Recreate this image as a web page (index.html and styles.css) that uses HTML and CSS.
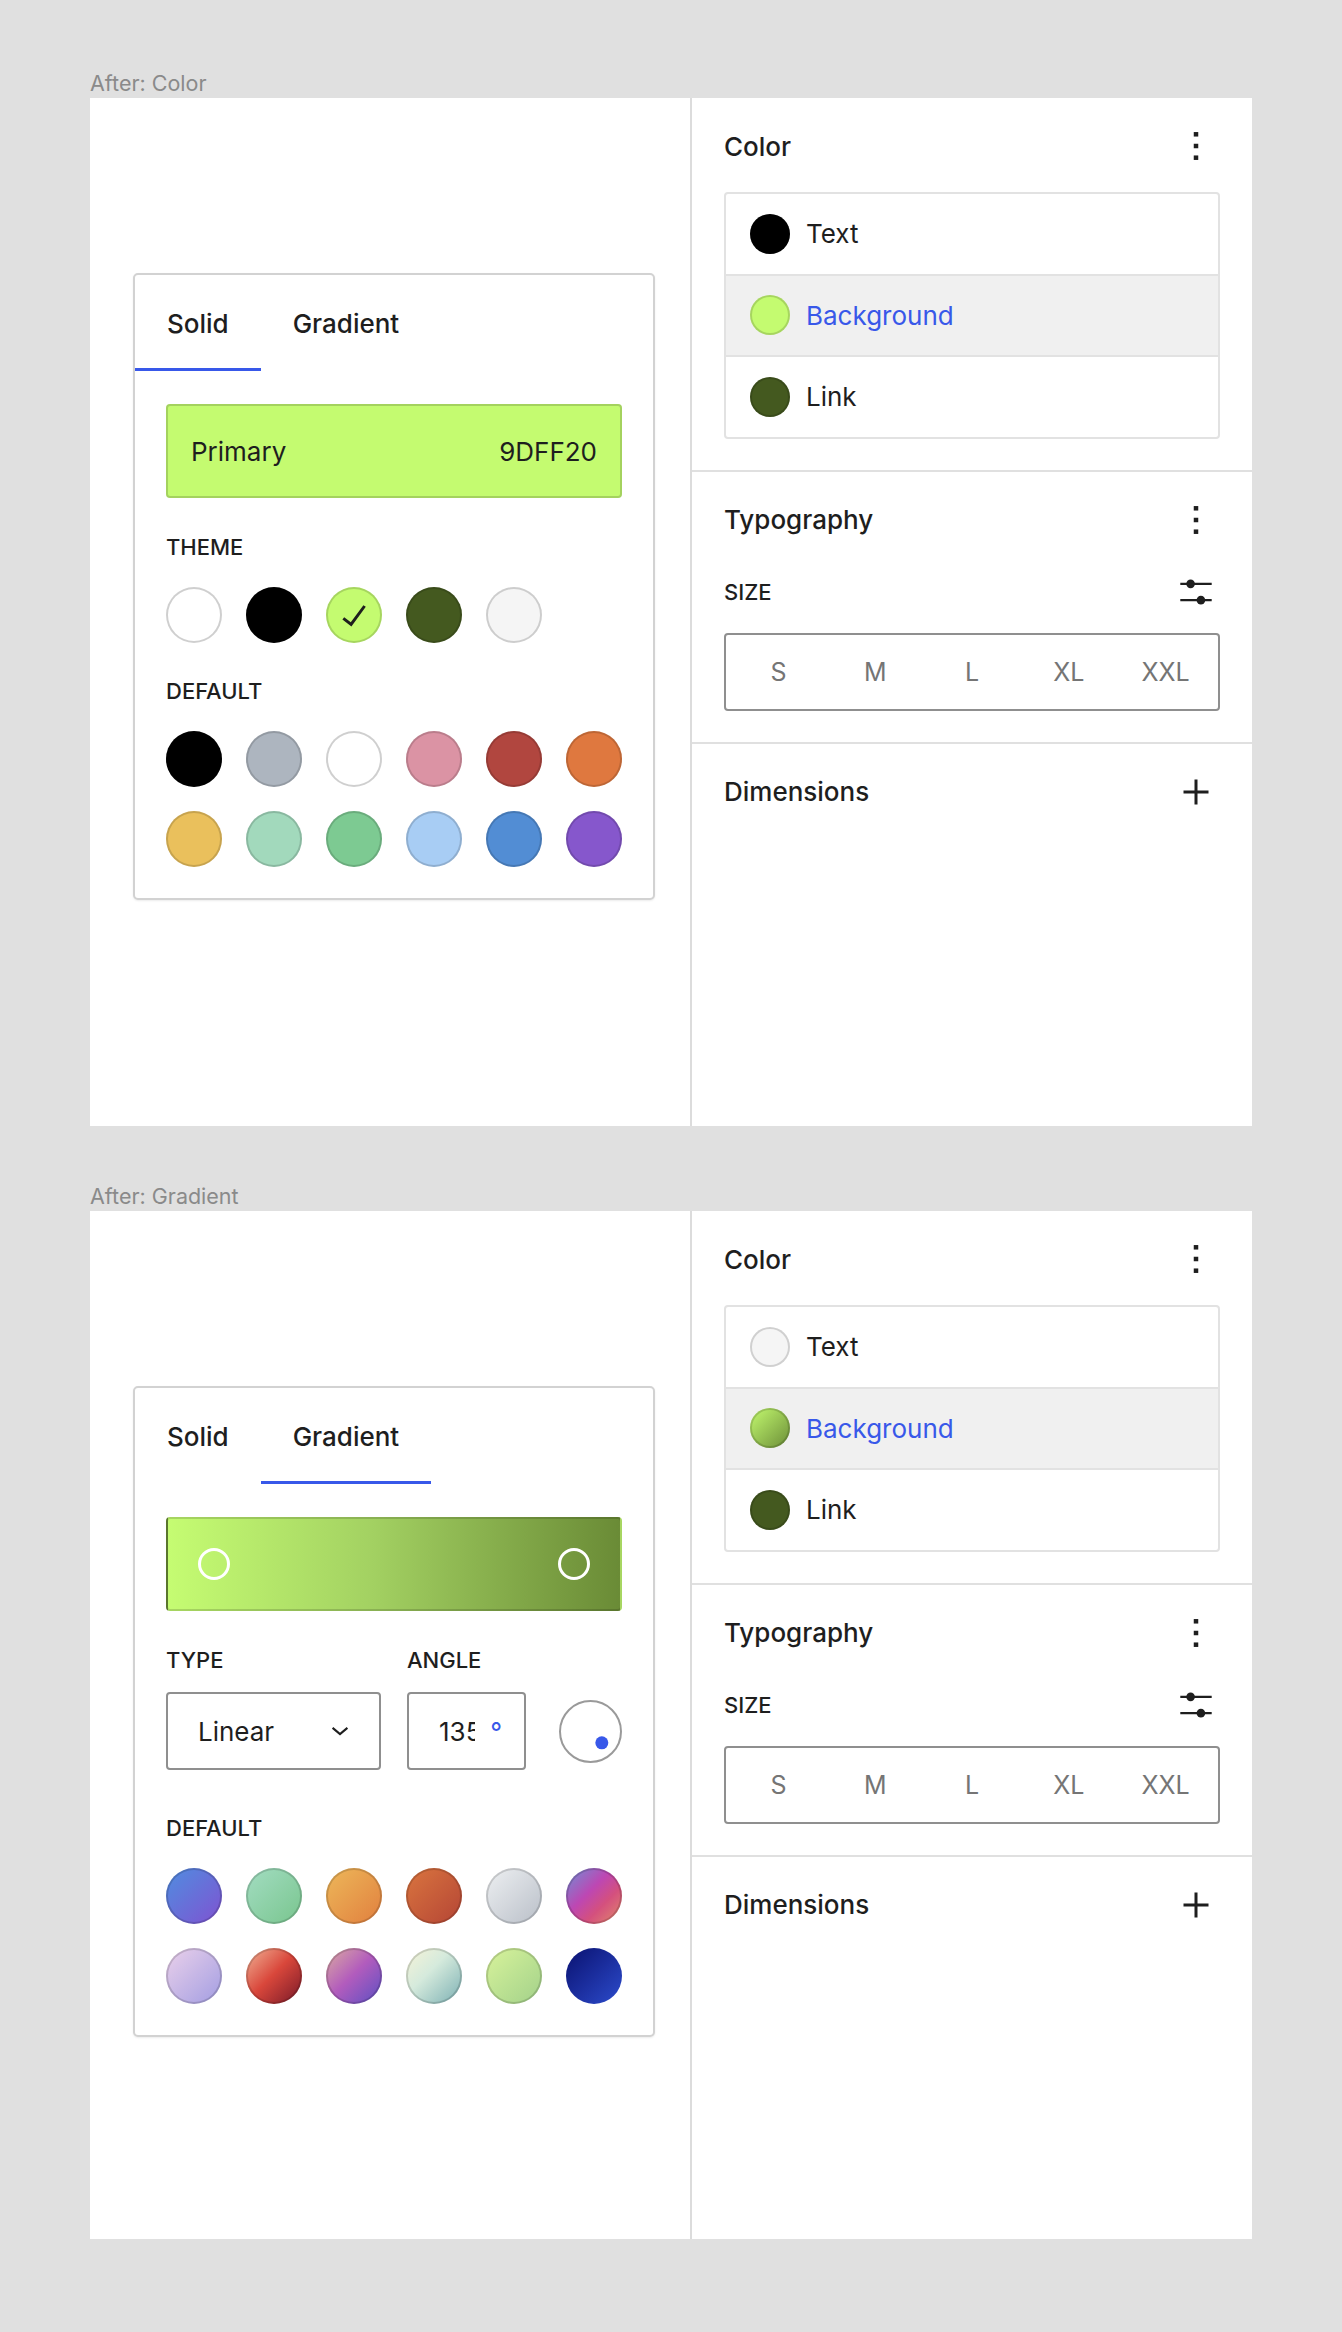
FILE: index.html
```html
<!DOCTYPE html>
<html lang="en">
<head>
<meta charset="utf-8">
<title>Color picker</title>
<link rel="stylesheet" href="styles.css">
</head>
<body>
<div class="page">

  <section class="group">
    <div class="group-label">After: Color</div>
    <div class="frame">
      <div class="canvas">
        <div class="picker">
          <div class="tabs">
            <div class="tab is-active">Solid</div>
            <div class="tab">Gradient</div>
          </div>
          <div class="picker-body">
            <div class="current">
              <span>Primary</span>
              <span>9DFF20</span>
            </div>
            <div class="label label-first">THEME</div>
            <div class="swatches">
              <span class="sw c-white"></span>
              <span class="sw c-black"></span>
              <span class="sw c-lime">
                <svg class="check" viewBox="0 0 24 24" width="48" height="48"><path d="M16.7 7.1l-6.3 8.5-3.3-2.5-.9 1.2 4.5 3.4L17.9 7.9z" fill="#1e1e1e"/></svg>
              </span>
              <span class="sw c-forest"></span>
              <span class="sw c-snow"></span>
            </div>
            <div class="label">DEFAULT</div>
            <div class="swatches">
              <span class="sw c-black"></span>
              <span class="sw c-gray"></span>
              <span class="sw c-white"></span>
              <span class="sw c-pink"></span>
              <span class="sw c-red"></span>
              <span class="sw c-orange"></span>
              <span class="sw c-yellow"></span>
              <span class="sw c-mint"></span>
              <span class="sw c-green"></span>
              <span class="sw c-sky"></span>
              <span class="sw c-blue"></span>
              <span class="sw c-purple"></span>
            </div>
          </div>
        </div>
      </div>
      <aside class="sidebar">
        <div class="panel">
          <div class="panel-head">
            <h2 class="panel-title">Color</h2>
            <svg class="icon" viewBox="0 0 48 48" width="48" height="48"><rect x="21.75" y="10.05" width="4.5" height="4.5" fill="#1e1e1e"/><rect x="21.75" y="21.75" width="4.5" height="4.5" fill="#1e1e1e"/><rect x="21.75" y="33.45" width="4.5" height="4.5" fill="#1e1e1e"/></svg>
          </div>
          <div class="colorlist">
            <div class="colorrow"><span class="ind c-black"></span><span>Text</span></div>
            <div class="colorrow is-selected"><span class="ind c-lime"></span><span>Background</span></div>
            <div class="colorrow"><span class="ind c-forest"></span><span>Link</span></div>
          </div>
        </div>
        <div class="panel">
          <div class="panel-head">
            <h2 class="panel-title">Typography</h2>
            <svg class="icon" viewBox="0 0 48 48" width="48" height="48"><rect x="21.75" y="10.05" width="4.5" height="4.5" fill="#1e1e1e"/><rect x="21.75" y="21.75" width="4.5" height="4.5" fill="#1e1e1e"/><rect x="21.75" y="33.45" width="4.5" height="4.5" fill="#1e1e1e"/></svg>
          </div>
          <div class="size-head">
            <span class="label-inline">SIZE</span>
            <svg class="icon" viewBox="0 0 48 48" width="48" height="48"><path d="M8.3 15.85H39.7M8.3 32.15H39.7" stroke="#1e1e1e" stroke-width="2.4" fill="none"/><circle cx="18.6" cy="15.85" r="4.3" fill="#1e1e1e"/><circle cx="28.9" cy="32.15" r="4.3" fill="#1e1e1e"/></svg>
          </div>
          <div class="segmented">
            <span>S</span><span>M</span><span>L</span><span>XL</span><span>XXL</span>
          </div>
        </div>
        <div class="panel">
          <div class="panel-head">
            <h2 class="panel-title">Dimensions</h2>
            <svg class="icon" viewBox="0 0 48 48" width="48" height="48"><path d="M24 11.5V36.5M11.5 24H36.5" stroke="#1e1e1e" stroke-width="3" fill="none"/></svg>
          </div>
        </div>
      </aside>
    </div>
  </section>

  <section class="group">
    <div class="group-label">After: Gradient</div>
    <div class="frame">
      <div class="canvas">
        <div class="picker">
          <div class="tabs">
            <div class="tab">Solid</div>
            <div class="tab is-active">Gradient</div>
          </div>
          <div class="picker-body">
            <div class="gradient-bar">
              <span class="stop"></span>
              <span class="stop"></span>
            </div>
            <div class="grad-controls">
              <span class="label-inline">TYPE</span>
              <span class="label-inline">ANGLE</span>
              <span></span>
              <div class="select">
                <span>Linear</span>
                <svg viewBox="0 0 24 24" width="24" height="24"><path d="M4.6 8.9L12 15.1 19.4 8.9" stroke="#1e1e1e" stroke-width="2.1" fill="none"/></svg>
              </div>
              <div class="angle">
                <span class="angle-value">135</span>
                <span class="angle-unit">°</span>
              </div>
              <div class="dial"><div class="dial-arm"><span class="dial-dot"></span></div></div>
            </div>
            <div class="label label-grad">DEFAULT</div>
            <div class="swatches">
              <span class="sw g1"></span>
              <span class="sw g2"></span>
              <span class="sw g3"></span>
              <span class="sw g4"></span>
              <span class="sw g5"></span>
              <span class="sw g6"></span>
              <span class="sw g7"></span>
              <span class="sw g8"></span>
              <span class="sw g9"></span>
              <span class="sw g10"></span>
              <span class="sw g11"></span>
              <span class="sw g12"></span>
            </div>
          </div>
        </div>
      </div>
      <aside class="sidebar">
        <div class="panel">
          <div class="panel-head">
            <h2 class="panel-title">Color</h2>
            <svg class="icon" viewBox="0 0 48 48" width="48" height="48"><rect x="21.75" y="10.05" width="4.5" height="4.5" fill="#1e1e1e"/><rect x="21.75" y="21.75" width="4.5" height="4.5" fill="#1e1e1e"/><rect x="21.75" y="33.45" width="4.5" height="4.5" fill="#1e1e1e"/></svg>
          </div>
          <div class="colorlist">
            <div class="colorrow"><span class="ind c-snow"></span><span>Text</span></div>
            <div class="colorrow is-selected"><span class="ind c-limegrad"></span><span>Background</span></div>
            <div class="colorrow"><span class="ind c-forest"></span><span>Link</span></div>
          </div>
        </div>
        <div class="panel">
          <div class="panel-head">
            <h2 class="panel-title">Typography</h2>
            <svg class="icon" viewBox="0 0 48 48" width="48" height="48"><rect x="21.75" y="10.05" width="4.5" height="4.5" fill="#1e1e1e"/><rect x="21.75" y="21.75" width="4.5" height="4.5" fill="#1e1e1e"/><rect x="21.75" y="33.45" width="4.5" height="4.5" fill="#1e1e1e"/></svg>
          </div>
          <div class="size-head">
            <span class="label-inline">SIZE</span>
            <svg class="icon" viewBox="0 0 48 48" width="48" height="48"><path d="M8.3 15.85H39.7M8.3 32.15H39.7" stroke="#1e1e1e" stroke-width="2.4" fill="none"/><circle cx="18.6" cy="15.85" r="4.3" fill="#1e1e1e"/><circle cx="28.9" cy="32.15" r="4.3" fill="#1e1e1e"/></svg>
          </div>
          <div class="segmented">
            <span>S</span><span>M</span><span>L</span><span>XL</span><span>XXL</span>
          </div>
        </div>
        <div class="panel">
          <div class="panel-head">
            <h2 class="panel-title">Dimensions</h2>
            <svg class="icon" viewBox="0 0 48 48" width="48" height="48"><path d="M24 11.5V36.5M11.5 24H36.5" stroke="#1e1e1e" stroke-width="3" fill="none"/></svg>
          </div>
        </div>
      </aside>
    </div>
  </section>

</div>
</body>
</html>
```

FILE: styles.css
```css
* { box-sizing: border-box; }

html, body {
  margin: 0;
  padding: 0;
}

body {
  background: #e0e0e0;
  font-family: Inter, "Noto Sans", "Liberation Sans", sans-serif;
  color: #1e1e1e;
}

.page {
  padding: 69px 90px 92px;
  display: flex;
  flex-direction: column;
  gap: 56px;
}

.group-label {
  font-size: 21.5px;
  line-height: 28px;
  padding-bottom: 1px;
  color: #8a8a8a;
}

.frame {
  display: flex;
  height: 1028px;
  background: #fff;
}

.canvas {
  width: 602px;
  flex: none;
  padding: 175px 0 0 43px;
  border-right: 2px solid #dcdcdc;
}

.sidebar {
  flex: 1;
}

/* ---------- picker card ---------- */

.picker {
  width: 522px;
  border: 2px solid #d2d2d2;
  border-radius: 5px;
  background: #fff;
  box-shadow: 0 1px 2px rgba(0, 0, 0, 0.08);
}

.tabs {
  display: flex;
  height: 96px;
}

.tab {
  display: flex;
  align-items: center;
  padding: 0 32px;
  font-size: 26px;
  font-weight: 500;
}

.tab.is-active {
  box-shadow: inset 0 -3px 0 #3858e9;
}

.picker-body {
  padding: 33px 31px 31px;
}

.current {
  height: 94px;
  border: 2px solid rgba(0, 0, 0, 0.16);
  border-radius: 4px;
  background: #c4fb70;
  display: flex;
  align-items: center;
  justify-content: space-between;
  padding: 0 23px;
  font-size: 26px;
}

.label,
.label-inline {
  font-size: 22px;
  line-height: 28px;
  font-weight: 500;
  text-transform: uppercase;
}

.label { margin-top: 34px; }
.label-first { margin-top: 35px; }
.label-grad { margin-top: 44px; }

.swatches {
  display: grid;
  grid-template-columns: repeat(6, 56px);
  gap: 24px;
  margin-top: 26px;
}

.sw {
  width: 56px;
  height: 56px;
  border-radius: 50%;
  box-shadow: inset 0 0 0 2px rgba(0, 0, 0, 0.15);
  display: flex;
  align-items: center;
  justify-content: center;
}

.check { display: block; }

/* solid colours */
.c-white { background: #fff; box-shadow: inset 0 0 0 2px rgba(0, 0, 0, 0.19); }
.c-black { background: #000; }
.c-lime { background: #c4fb70; }
.c-forest { background: #44591f; }
.c-snow { background: #f5f5f5; box-shadow: inset 0 0 0 2px rgba(0, 0, 0, 0.16); }
.c-gray { background: #adb5bf; }
.c-pink { background: #db93a4; }
.c-red { background: #b1463f; }
.c-orange { background: #df783f; }
.c-yellow { background: #eac05c; }
.c-mint { background: #a2d9bc; }
.c-green { background: #7dca92; }
.c-sky { background: #a8cdf4; }
.c-blue { background: #528dd4; }
.c-purple { background: #8657cc; }
.c-limegrad { background: linear-gradient(135deg, #c4fb70, #6b8d37); }

/* gradients */
.g1 { background: linear-gradient(135deg, #4f8ee0 0%, #8052d1 100%); }
.g2 { background: linear-gradient(135deg, #a3ddc2 0%, #79c58e 100%); }
.g3 { background: linear-gradient(135deg, #edb85a 0%, #e17f3e 100%); }
.g4 { background: linear-gradient(135deg, #da753f 0%, #b44535 100%); }
.g5 { background: linear-gradient(135deg, #eef0f2 0%, #b9bfc8 100%); }
.g6 { background: linear-gradient(135deg, #6d91d6 0%, #bd47b3 42%, #d4507e 66%, #e28d6a 100%); }
.g7 { background: linear-gradient(135deg, #ebd1ea 0%, #a29de2 100%); }
.g8 { background: linear-gradient(135deg, #f1b598 0%, #d9473b 48%, #761828 100%); }
.g9 { background: linear-gradient(135deg, #dcaca0 0%, #b25cbd 48%, #5a4fc3 100%); }
.g10 { background: linear-gradient(135deg, #f7f4d8 0%, #d5eadc 42%, #7aafb3 100%); }
.g11 { background: linear-gradient(135deg, #d8f39b 0%, #a2d18a 100%); }
.g12 { background: linear-gradient(135deg, #0a1170 0%, #2c4bcc 100%); box-shadow: none; }

/* gradient bar */
.gradient-bar {
  height: 94px;
  border: 2px solid rgba(0, 0, 0, 0.15);
  border-radius: 4px;
  background: linear-gradient(90deg, #c5fc72 0%, #a3d162 45%, #6a8b36 100%);
  display: flex;
  align-items: center;
  justify-content: space-between;
  padding: 0 30px;
}

.stop {
  width: 32px;
  height: 32px;
  border-radius: 50%;
  border: 3px solid #fff;
}

.grad-controls {
  display: grid;
  grid-template-columns: 215px 119px 1fr;
  column-gap: 26px;
  row-gap: 18px;
  align-items: center;
  margin-top: 35px;
}

.select,
.angle {
  height: 78px;
  border: 2px solid #8f8f8f;
  border-radius: 4px;
  display: flex;
  align-items: center;
  font-size: 26px;
}

.select {
  justify-content: space-between;
  padding: 0 27px 0 30px;
}

.select svg { display: block; }

.angle {
  padding: 0 22px 0 30px;
}

.angle-value {
  width: 36px;
  overflow: hidden;
  white-space: nowrap;
}

.angle-unit {
  margin-left: auto;
  color: #3858e9;
}

.dial {
  justify-self: end;
  width: 63px;
  height: 63px;
  border: 2px solid #9a9a9a;
  border-radius: 50%;
  display: flex;
  align-items: center;
  justify-content: center;
}

.dial-arm {
  width: 13px;
  height: 45px;
  transform: rotate(135deg);
  display: flex;
  flex-direction: column;
}

.dial-dot {
  width: 13px;
  height: 13px;
  border-radius: 50%;
  background: #3858e9;
}

/* ---------- sidebar ---------- */

.panel {
  padding: 22px 32px 31px;
}

.panel + .panel {
  border-top: 2px solid #e0e0e0;
}

.panel-head {
  height: 52px;
  display: flex;
  align-items: center;
  justify-content: space-between;
}

.panel-title {
  margin: 0;
  font-size: 26px;
  font-weight: 500;
}

.icon { display: block; }

.colorlist {
  margin-top: 20px;
  border: 2px solid #e2e2e2;
  border-radius: 4px;
}

.colorrow {
  box-sizing: content-box;
  height: 79.5px;
  display: flex;
  align-items: center;
  gap: 16px;
  padding-left: 24px;
  font-size: 26px;
}

.colorrow + .colorrow {
  border-top: 2px solid #e2e2e2;
}

.colorrow.is-selected {
  background: #f0f0f0;
  color: #3858e9;
}

.ind {
  width: 40px;
  height: 40px;
  border-radius: 50%;
  box-shadow: inset 0 0 0 2px rgba(0, 0, 0, 0.15);
}

.size-head {
  margin-top: 20px;
  height: 52px;
  display: flex;
  align-items: center;
  justify-content: space-between;
}

.segmented {
  margin-top: 15px;
  height: 78px;
  border: 2px solid #8f8f8f;
  border-radius: 4px;
  padding: 0 4px;
  display: grid;
  grid-template-columns: repeat(5, 1fr);
  align-items: center;
  justify-items: center;
  font-size: 25px;
  color: #757575;
}
```
